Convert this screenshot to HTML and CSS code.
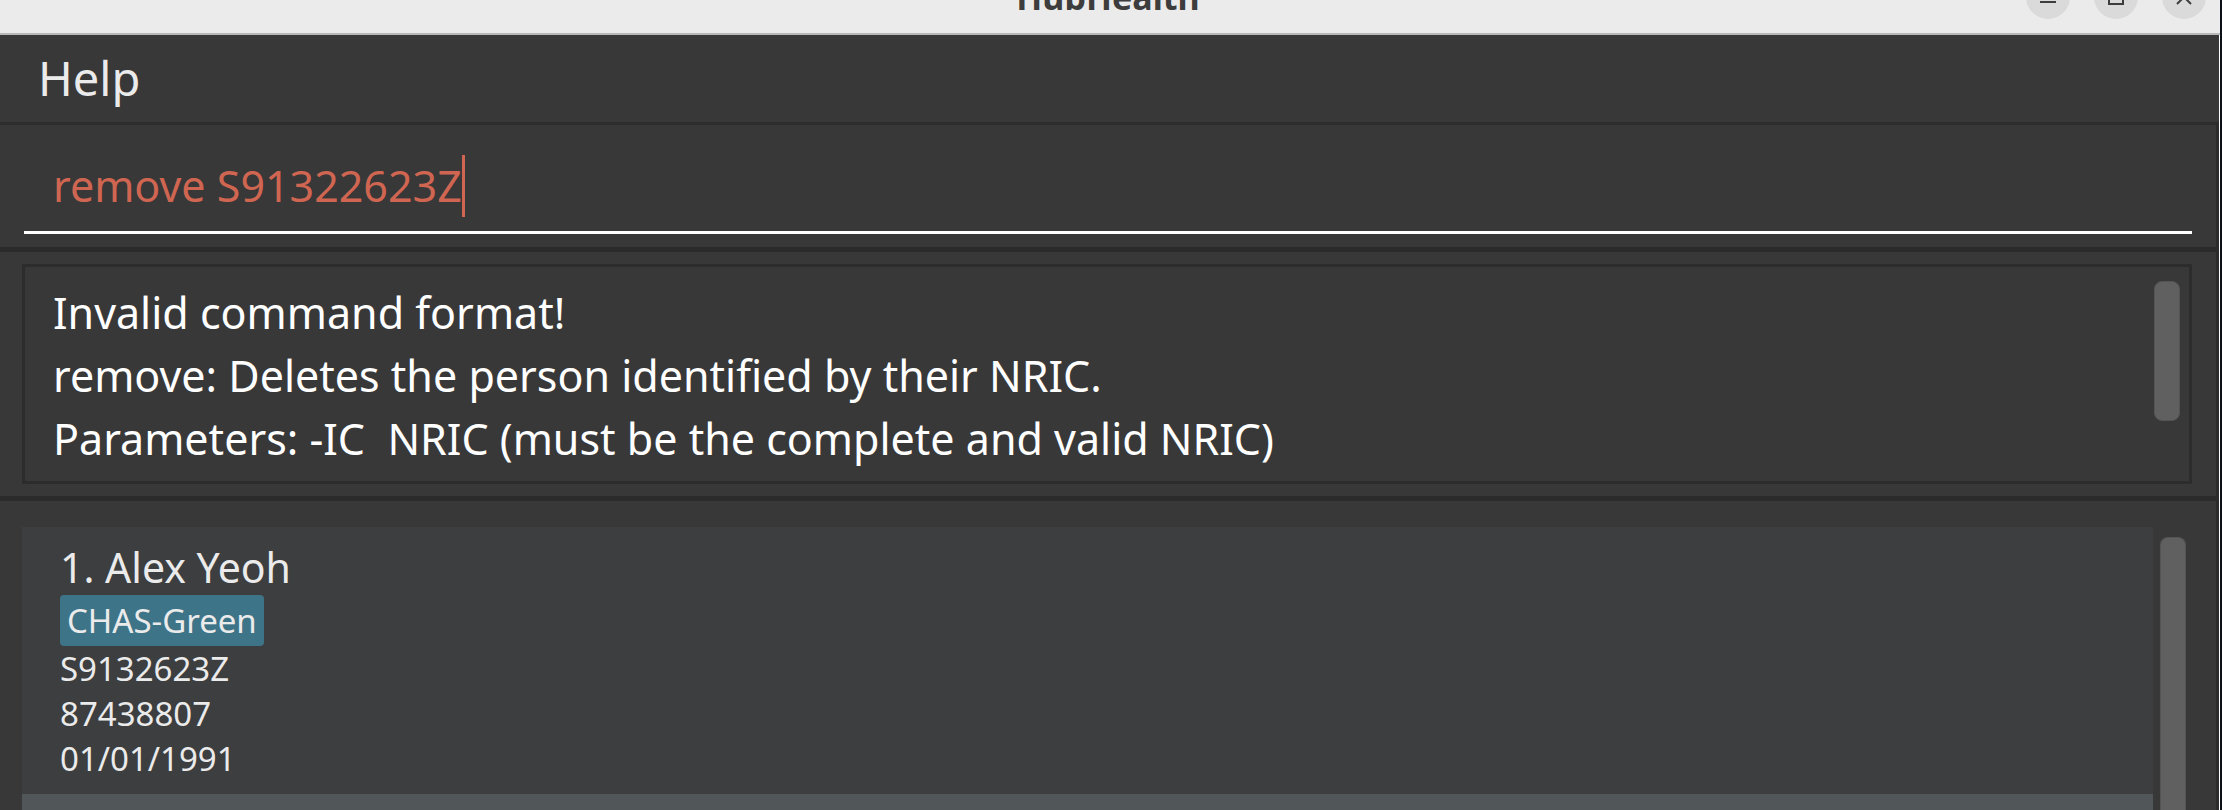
FILE: index.html
```html
<!DOCTYPE html>
<html lang="en">
<head>
<meta charset="utf-8">
<title>HubHealth</title>
<link rel="stylesheet" href="styles.css">
</head>
<body>
<div class="window">
  <header class="titlebar">
    <h1 class="title">HubHealth</h1>
    <div class="window-buttons">
      <button class="window-button" type="button" aria-label="Minimize">
        <svg viewBox="0 0 16 16"><path d="M0 13h16"/></svg>
      </button>
      <button class="window-button" type="button" aria-label="Maximize">
        <svg viewBox="0 0 16 16"><path d="M1 1h14v14H1z"/></svg>
      </button>
      <button class="window-button" type="button" aria-label="Close">
        <svg viewBox="0 0 16 16"><path d="M1 1l14 14M15 1L1 15"/></svg>
      </button>
    </div>
  </header>
  <div class="client">
    <nav class="menubar">
      <button class="menu" type="button">Help</button>
    </nav>
    <main class="panes">
      <section class="command-pane">
        <div class="command-field">
          <input class="command-input" type="text" aria-label="Command" value="remove S91322623Z">
          <span class="caret"></span>
        </div>
      </section>
      <section class="result-pane">
        <div class="result-box">
          <p class="result-text">Invalid command format!
remove: Deletes the person identified by their NRIC.
Parameters: -IC  NRIC (must be the complete and valid NRIC)</p>
          <div class="thumb result-thumb"></div>
        </div>
      </section>
      <section class="list-pane">
        <ul class="person-list">
          <li class="person">
            <h2 class="name">1. Alex Yeoh</h2>
            <span class="tag">CHAS-Green</span>
            <p class="detail">S9132623Z</p>
            <p class="detail">87438807</p>
            <p class="detail">01/01/1991</p>
          </li>
          <li class="person person-alt"></li>
        </ul>
        <div class="thumb list-thumb"></div>
      </section>
    </main>
  </div>
</div>
</body>
</html>
```
FILE: styles.css
```css
* {
  box-sizing: border-box;
}

body {
  margin: 0;
  height: 100vh;
  overflow: hidden;
  background: #0c1018;
  color: #ebebeb;
  font-family: "Noto Sans", "Open Sans", sans-serif;
}

h1, h2, p, ul {
  margin: 0;
  padding: 0;
  font-weight: 400;
}

button, input {
  margin: 0;
  padding: 0;
  border: 0;
  background: none;
  color: inherit;
  font: inherit;
}

.window {
  display: flex;
  flex-direction: column;
  height: 100%;
  margin-right: 2px;
}

/* The bar is shorter than its contents, which overflow past the top edge. */
.titlebar {
  flex: none;
  display: grid;
  grid-template-columns: 1fr auto 1fr;
  grid-template-rows: 100%;
  align-items: end;
  height: 35px;
  padding: 0 14px 0 10px;
  border-bottom: 2px solid #b8bab9;
  background: #ebebeb;
  color: #3d3d3d;
  overflow: hidden;
}

.title {
  grid-column: 2;
  padding-bottom: 13px;
  font-size: 34px;
  line-height: 46px;
  font-weight: 700;
}

.window-buttons {
  display: flex;
  justify-content: flex-end;
  gap: 24px;
  padding-bottom: 14px;
}

.window-button {
  display: flex;
  align-items: center;
  justify-content: center;
  width: 44px;
  height: 44px;
  border-radius: 50%;
  background: #dadada;
}

.window-button svg {
  width: 16px;
  height: 16px;
  overflow: visible;
  fill: none;
  stroke: #3d3d3d;
  stroke-width: 2;
}

.client {
  flex: 1;
  min-height: 0;
  display: flex;
  flex-direction: column;
  border-right: 1px solid #fff;
  background: #383838;
}

.menubar {
  flex: none;
  padding: 11px 38px 12px;
}

.menu {
  display: block;
  font-size: 47px;
  line-height: 64px;
}

.panes {
  flex: 1;
  min-height: 0;
  display: flex;
  flex-direction: column;
  border: 3px solid #2c2c2c;
  border-bottom: 0;
  border-left: 0;
}

.command-pane {
  flex: none;
  padding: 30px 24px 13px;
}

.command-field {
  display: flex;
  padding: 0 29px 14px;
  border-bottom: 3px solid #fff;
}

.command-input {
  field-sizing: content;
  height: 62px;
  color: #d06651;
  font-size: 43px;
  line-height: 62px;
  outline: 0;
}

.caret {
  width: 3px;
  background: #d06651;
}

.result-pane {
  flex: none;
  padding: 12px 24px 12px 22px;
  border: solid #2b2b2b;
  border-width: 5px 0;
}

.result-box {
  display: flex;
  align-items: flex-start;
  justify-content: space-between;
  padding: 14px 9px 11px 28px;
  border: 3px solid #2c2c2c;
}

.result-text {
  color: #fff;
  font-size: 43px;
  line-height: 63px;
  white-space: pre-wrap;
}

.thumb {
  flex: none;
  width: 26px;
  border: 1px solid #545454;
  border-radius: 8px;
  background: #606060;
}

.result-thumb {
  height: 140px;
}

.list-pane {
  flex: 1;
  min-height: 0;
  display: flex;
  gap: 7px;
  padding: 26px 30px 0 22px;
}

.person-list {
  flex: 1;
  display: flex;
  flex-direction: column;
  overflow: hidden;
  list-style: none;
}

.person {
  flex: none;
  padding: 12px 38px 13px;
  background: #3c3e3f;
}

.person-alt {
  flex: 1;
  padding: 0;
  background: #515658;
}

.name {
  font-size: 41px;
  line-height: 56px;
}

.tag {
  display: block;
  width: fit-content;
  padding: 3px 7px;
  border-radius: 4px;
  background: #3e7488;
  font-size: 33px;
  line-height: 45px;
}

.detail {
  font-size: 33px;
  line-height: 45px;
}

.list-thumb {
  margin-top: 10px;
  border-bottom: 0;
  border-radius: 8px 8px 0 0;
}
```
